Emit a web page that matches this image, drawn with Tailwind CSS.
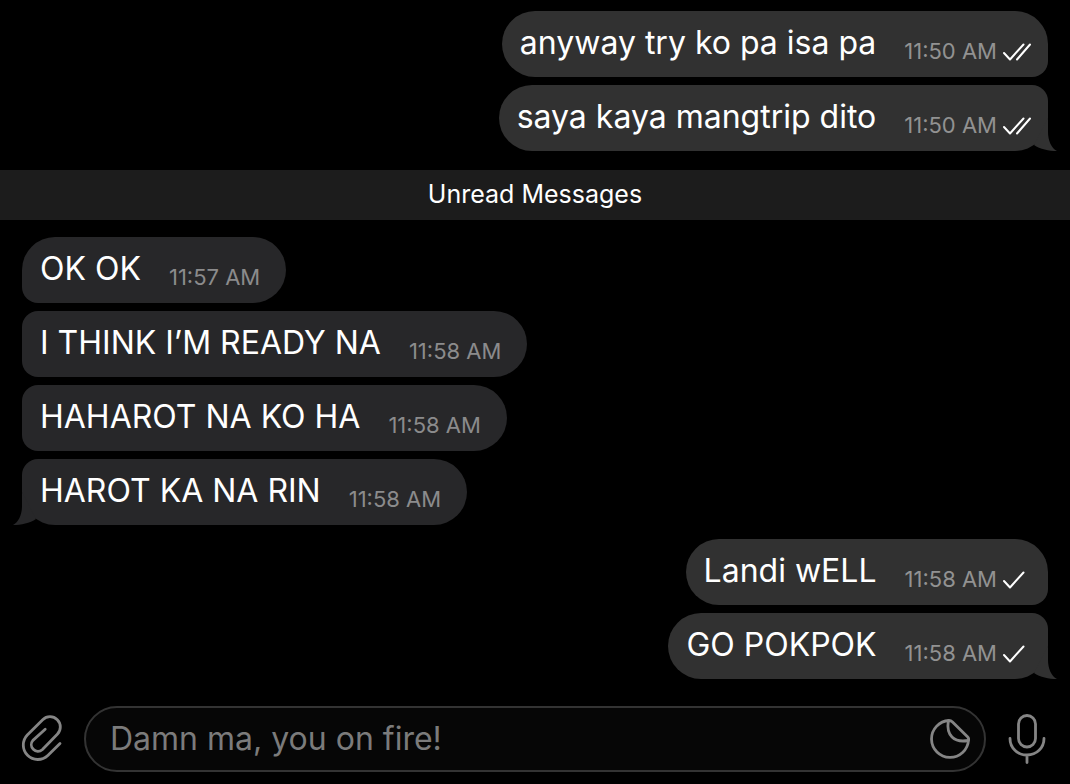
<!DOCTYPE html>
<html lang="en">
<head>
  <meta charset="UTF-8">
  <meta name="viewport" content="width=device-width, initial-scale=1.0">
  <title>Chat</title>
  <script src="https://cdn.jsdelivr.net/npm/@tailwindcss/browser@4"></script>
</head>
<body class="bg-black text-white font-['Inter',sans-serif] min-h-screen flex flex-col">

  <!-- shared icons -->
  <svg class="hidden">
    <symbol id="sent" viewBox="0 0 28 18"><path d="M1 10l6 6.500L20.500 1.500" fill="none" stroke="#fff" stroke-width="2" stroke-linecap="round" stroke-linejoin="round" /></symbol>
    <symbol id="read" viewBox="0 0 28 18"><path d="M1 10l6 6.500L20.500 1.500M14 16.500L27 1.500" fill="none" stroke="#fff" stroke-width="2" stroke-linecap="round" stroke-linejoin="round" /></symbol>
    <symbol id="tail" viewBox="0 0 32 33"><path d="M23 0V14C23 22 26 30 32 33C24 33 15 31 9 27Z" fill="currentColor" /></symbol>
  </svg>

  <main class="pt-[11px]">
    <ol class="flex flex-col items-end gap-2 px-[22px]">
      <li class="flex items-end bg-[#313131] rounded-[33px] rounded-br-2xl pl-[18px] pr-[17px]">
        <p class="text-[32px] leading-[64px] mb-0.5">anyway try ko pa isa pa</p>
        <time class="text-[22px] leading-7 mb-3 ml-7 text-[#929292]">11:50 AM</time>
        <svg class="w-7 h-[18px] mb-4 ml-1.5" role="img" aria-label="Read"><use href="#read" /></svg>
      </li>
      <li class="relative flex items-end bg-[#313131] rounded-[33px] rounded-tr-2xl pl-[18px] pr-[17px]">
        <p class="text-[32px] leading-[64px] mb-0.5">saya kaya mangtrip dito</p>
        <time class="text-[22px] leading-7 mb-3 ml-7 text-[#929292]">11:50 AM</time>
        <svg class="w-7 h-[18px] mb-4 ml-1.5" role="img" aria-label="Read"><use href="#read" /></svg>
        <svg class="absolute bottom-0 -right-[9px] w-8 h-[33px] text-[#313131]"><use href="#tail" /></svg>
      </li>
    </ol>

    <h2 class="mt-[19px] mb-[17px] pb-0.5 bg-[#1c1c1c] text-center text-[25px] leading-[48px]">Unread Messages</h2>

    <ol class="flex flex-col items-start gap-2 px-[22px]">
      <li class="flex items-end bg-[#272729] rounded-[33px] rounded-bl-2xl pl-[18px] pr-[26px]">
        <p class="text-[32px] leading-[64px] mb-0.5">OK OK</p>
        <time class="text-[22px] leading-7 mb-3 ml-7 text-[#8b8b8c]">11:57 AM</time>
      </li>
      <li class="flex items-end bg-[#272729] rounded-l-2xl rounded-r-[33px] pl-[18px] pr-[26px]">
        <p class="text-[32px] leading-[64px] mb-0.5">I THINK I’M READY NA</p>
        <time class="text-[22px] leading-7 mb-3 ml-7 text-[#8b8b8c]">11:58 AM</time>
      </li>
      <li class="flex items-end bg-[#272729] rounded-l-2xl rounded-r-[33px] pl-[18px] pr-[26px]">
        <p class="text-[32px] leading-[64px] mb-0.5">HAHAROT NA KO HA</p>
        <time class="text-[22px] leading-7 mb-3 ml-7 text-[#8b8b8c]">11:58 AM</time>
      </li>
      <li class="relative flex items-end bg-[#272729] rounded-[33px] rounded-tl-2xl pl-[18px] pr-[26px]">
        <p class="text-[32px] leading-[64px] mb-0.5">HAROT KA NA RIN</p>
        <time class="text-[22px] leading-7 mb-3 ml-7 text-[#8b8b8c]">11:58 AM</time>
        <svg class="absolute bottom-0 -left-[9px] w-8 h-[33px] -scale-x-100 text-[#272729]"><use href="#tail" /></svg>
      </li>
    </ol>

    <ol class="mt-3.5 flex flex-col items-end gap-2 px-[22px]">
      <li class="flex items-end bg-[#313131] rounded-[33px] rounded-br-2xl pl-[18px] pr-[17px]">
        <p class="text-[32px] leading-[64px] mb-0.5">Landi wELL</p>
        <time class="text-[22px] leading-7 mb-3 ml-7 text-[#929292]">11:58 AM</time>
        <svg class="w-7 h-[18px] mb-4 ml-1.5" role="img" aria-label="Sent"><use href="#sent" /></svg>
      </li>
      <li class="relative flex items-end bg-[#313131] rounded-[33px] rounded-tr-2xl pl-[18px] pr-[17px]">
        <p class="text-[32px] leading-[64px] mb-0.5">GO POKPOK</p>
        <time class="text-[22px] leading-7 mb-3 ml-7 text-[#929292]">11:58 AM</time>
        <svg class="w-7 h-[18px] mb-4 ml-1.5" role="img" aria-label="Sent"><use href="#sent" /></svg>
        <svg class="absolute bottom-0 -right-[9px] w-8 h-[33px] text-[#313131]"><use href="#tail" /></svg>
      </li>
    </ol>
  </main>

  <form class="mt-auto flex items-center gap-[22px] pt-6 pb-3 pl-[22px] pr-6 text-[#858585]">
    <button type="button" aria-label="Attach file">
      <svg class="w-10 h-12 overflow-visible" viewBox="0 0 40 48" fill="none" stroke="currentColor" stroke-width="2.800" stroke-linecap="round" stroke-linejoin="round">
        <path d="M38 28.500L25.800 40.500A14.500 14.500 0 0 1 5.300 20L20.700 4.700A10.300 10.300 0 0 1 35.300 19.300L20.200 34.700A6.600 6.600 0 0 1 10.900 25.400L23.200 14.300" />
      </svg>
    </button>
    <div class="flex-1 flex items-center h-[66px] rounded-full border-2 border-[#333] bg-[#060606] pl-6 pr-3.5">
      <input type="text" aria-label="Message" placeholder="Damn ma, you on fire!" class="flex-1 min-w-0 h-full pb-0.5 text-[32px] text-white placeholder:text-[#7b7b7b] outline-none">
      <button type="button" aria-label="Stickers">
        <svg class="w-10 h-10" viewBox="0 0 40 40" fill="none" stroke="currentColor" stroke-width="2.800" stroke-linecap="round" stroke-linejoin="round">
          <path d="M38.500 21A18.500 18.500 0 1 1 19 1.500Q21 1.500 22.500 3L37.500 17.800Q39 19.300 38.500 21Z" />
          <path d="M18.300 2C17.200 9 18 14 22 18C26 22 31 22.800 38.300 21.500" />
        </svg>
      </button>
    </div>
    <button type="button" aria-label="Record voice message">
      <svg class="w-[38px] h-[50px]" viewBox="0 0 38 50" fill="none" stroke="currentColor" stroke-width="2.800" stroke-linecap="round">
        <rect x="10.500" y="1.500" width="17" height="31.500" rx="8.500" />
        <path d="M2 24.500C2 34 9.500 41 19 41S36 34 36 24.500M19 41V48.500" />
      </svg>
    </button>
  </form>

</body>
</html>
